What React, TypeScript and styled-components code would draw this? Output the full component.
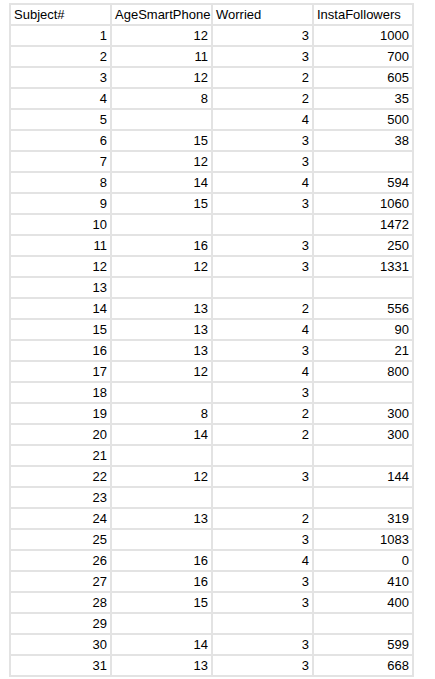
import React from 'react';
import styled, { createGlobalStyle } from 'styled-components';

const GlobalStyle = createGlobalStyle`
  html, body {
    margin: 0;
    padding: 0;
    background: #ffffff;
  }
`;

const Sheet = styled.div`
  display: grid;
  grid-template-columns: 99px 99px 99px 98px;
  grid-auto-rows: 19px;
  gap: 2px;
  padding: 2px;
  width: max-content;
  margin: 3px 0 0 9px;
  background-color: #e3e3e3;
  font-family: 'Liberation Sans', Arial, sans-serif;
  font-size: 13px;
  color: #000;
`;

const Cell = styled.div<{ $head?: boolean }>`
  background-color: #fff;
  line-height: 19px;
  padding: 0 3px;
  white-space: nowrap;
  overflow: hidden;
  text-align: ${(p) => (p.$head ? 'left' : 'right')};
`;

const headers = ['Subject#', 'AgeSmartPhone', 'Worried', 'InstaFollowers'];

// [age, worried, followers]; empty string = blank cell
const rows: (number | string)[][] = [
  [12, 3, 1000],
  [11, 3, 700],
  [12, 2, 605],
  [8, 2, 35],
  ['', 4, 500],
  [15, 3, 38],
  [12, 3, ''],
  [14, 4, 594],
  [15, 3, 1060],
  ['', '', 1472],
  [16, 3, 250],
  [12, 3, 1331],
  ['', '', ''],
  [13, 2, 556],
  [13, 4, 90],
  [13, 3, 21],
  [12, 4, 800],
  ['', 3, ''],
  [8, 2, 300],
  [14, 2, 300],
  ['', '', ''],
  [12, 3, 144],
  ['', '', ''],
  [13, 2, 319],
  ['', 3, 1083],
  [16, 4, 0],
  [16, 3, 410],
  [15, 3, 400],
  ['', '', ''],
  [14, 3, 599],
  [13, 3, 668],
];

const App: React.FC = () => {
  return (
    <>
      <GlobalStyle />
      <Sheet>
        {headers.map((h) => (
          <Cell key={h} $head>
            {h}
          </Cell>
        ))}
        {rows.map((r, i) => (
          <React.Fragment key={i}>
            <Cell>{i + 1}</Cell>
            {r.map((v, j) => (
              <Cell key={j}>{v}</Cell>
            ))}
          </React.Fragment>
        ))}
      </Sheet>
    </>
  );
};

export default App;
